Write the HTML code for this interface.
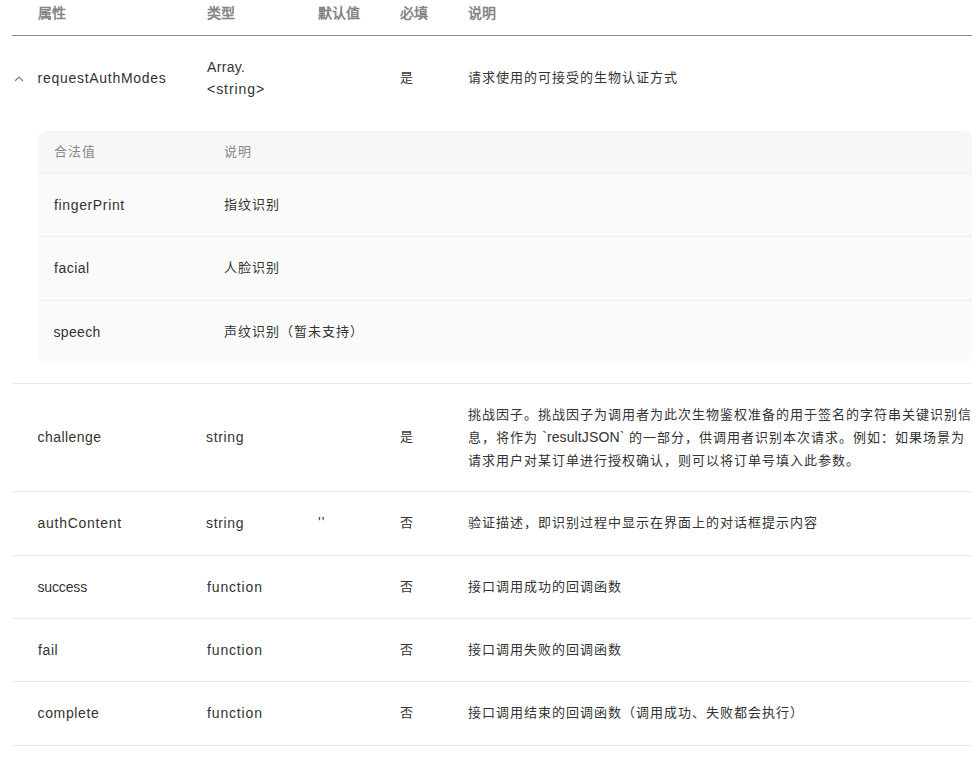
<!DOCTYPE html>
<html lang="zh-CN"><head><meta charset="utf-8">
<style>
html,body{margin:0;padding:0;background:#fff;width:978px;height:763px;overflow:hidden;}
body{position:relative;font-family:"Liberation Sans",sans-serif;font-size:14px;line-height:22.4px;color:#333;}
.t{position:absolute;white-space:nowrap;letter-spacing:0.6px;}
.c{letter-spacing:1px;font-size:13px;margin-left:-0.5px;}
.lat{font-size:14px;letter-spacing:0.12px;}
.h{color:#858585;font-weight:bold;top:2px;font-size:14px;letter-spacing:0;}
.hl{position:absolute;left:12px;width:960px;height:1px;}
.dk{background:#8c8c8c;}
.lt{background:#e8e8e8;}
.box{position:absolute;left:38px;top:131px;width:934px;height:232px;background:#fafafa;border-radius:8px;overflow:hidden;}
.bh{position:absolute;left:0;top:0;width:934px;height:42px;background:#f7f7f7;}
.bl{position:absolute;left:0;width:934px;height:1px;background:#eeeeee;}
.g{color:#888;}
.chev{position:absolute;left:14px;top:76px;width:10px;height:6px;}
</style></head><body>
<!-- header -->
<div class="t h c" style="left:38px;">属性</div>
<div class="t h c" style="left:207px;">类型</div>
<div class="t h c" style="left:318px;">默认值</div>
<div class="t h c" style="left:400px;">必填</div>
<div class="t h c" style="left:468px;">说明</div>
<div class="hl dk" style="top:35px;"></div>

<!-- row 1 -->
<svg class="chev" viewBox="0 0 10 6"><path d="M1.5 4.5 L5 1.1 L8.5 4.5" fill="none" stroke="#777" stroke-width="1.2" stroke-linecap="round" stroke-linejoin="round"/></svg>
<div class="t" style="left:37.5px;top:67px;letter-spacing:0.72px;">requestAuthModes</div>
<div class="t" style="left:207px;top:56px;"><span style="letter-spacing:0.34px">Array.</span><br><span style="letter-spacing:0.95px">&lt;string&gt;</span></div>
<div class="t c" style="left:400px;top:67px;">是</div>
<div class="t c" style="left:468px;top:67px;">请求使用的可接受的生物认证方式</div>

<div class="box">
  <div class="bh"></div>
  <div class="bl" style="top:42px;"></div>
  <div class="bl" style="top:105px;"></div>
  <div class="bl" style="top:169px;"></div>
</div>
<div class="t g c" style="left:54px;top:141px;">合法值</div>
<div class="t g c" style="left:224px;top:141px;">说明</div>
<div class="t" style="left:54px;top:194px;letter-spacing:0.64px;">fingerPrint</div>
<div class="t c" style="left:224px;top:194px;">指纹识别</div>
<div class="t" style="left:54px;top:257px;letter-spacing:0.5px;">facial</div>
<div class="t c" style="left:224px;top:257px;">人脸识别</div>
<div class="t" style="left:53.5px;top:321px;letter-spacing:0.32px;">speech</div>
<div class="t c" style="left:224px;top:321px;">声纹识别（暂未支持）</div>

<div class="hl lt" style="top:383px;"></div>

<!-- challenge -->
<div class="t" style="left:37.5px;top:426px;letter-spacing:0.45px;">challenge</div>
<div class="t" style="left:206px;top:426px;letter-spacing:0.66px;">string</div>
<div class="t c" style="left:400px;top:426px;">是</div>
<div class="t c" style="left:468px;top:404px;">挑战因子。挑战因子为调用者为此次生物鉴权准备的用于签名的字符串关键识别信<br>息，将作为 <span class="lat">`resultJSON`</span> 的一部分，供调用者识别本次请求。例如：如果场景为<br>请求用户对某订单进行授权确认，则可以将订单号填入此参数。</div>
<div class="hl lt" style="top:491px;"></div>

<!-- authContent -->
<div class="t" style="left:37.5px;top:512px;letter-spacing:0.73px;">authContent</div>
<div class="t" style="left:206px;top:512px;letter-spacing:0.66px;">string</div>
<div class="t" style="left:318px;top:511px;letter-spacing:1.2px;">''</div>
<div class="t c" style="left:400px;top:512px;">否</div>
<div class="t c" style="left:468px;top:512px;">验证描述，即识别过程中显示在界面上的对话框提示内容</div>
<div class="hl lt" style="top:555px;"></div>

<!-- success -->
<div class="t" style="left:37.5px;top:576px;letter-spacing:-0.15px;">success</div>
<div class="t" style="left:207px;top:576px;letter-spacing:0.85px;">function</div>
<div class="t c" style="left:400px;top:576px;">否</div>
<div class="t c" style="left:468px;top:576px;">接口调用成功的回调函数</div>
<div class="hl lt" style="top:618px;"></div>

<!-- fail -->
<div class="t" style="left:38px;top:639px;letter-spacing:0.6px;">fail</div>
<div class="t" style="left:207px;top:639px;letter-spacing:0.85px;">function</div>
<div class="t c" style="left:400px;top:639px;">否</div>
<div class="t c" style="left:468px;top:639px;">接口调用失败的回调函数</div>
<div class="hl lt" style="top:681px;"></div>

<!-- complete -->
<div class="t" style="left:37.5px;top:702px;letter-spacing:0.65px;">complete</div>
<div class="t" style="left:207px;top:702px;letter-spacing:0.85px;">function</div>
<div class="t c" style="left:400px;top:702px;">否</div>
<div class="t c" style="left:468px;top:702px;">接口调用结束的回调函数（调用成功、失败都会执行）</div>
<div class="hl lt" style="top:745px;"></div>
</body></html>
